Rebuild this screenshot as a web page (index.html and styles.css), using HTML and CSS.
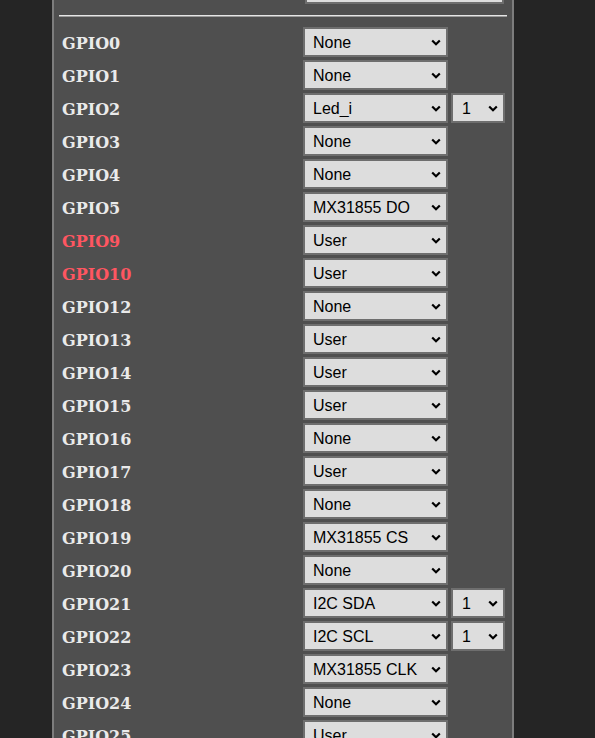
FILE: index.html
```html
<!DOCTYPE html>
<html>
<head>
<meta charset="utf-8">
<link rel="stylesheet" href="styles.css">
</head>
<body>
<div class="panel">
  <div class="top">
    <select class="sel wide"><option>ESP32-DevKit</option></select>
  </div>
  <hr class="rule">
  <div class="rows">
    <div class="row"><span class="lbl">GPIO0</span><select class="sel"><option>None</option></select></div>
    <div class="row"><span class="lbl">GPIO1</span><select class="sel"><option>None</option></select></div>
    <div class="row"><span class="lbl">GPIO2</span><select class="sel"><option>Led_i</option></select><select class="sel idx"><option>1</option></select></div>
    <div class="row"><span class="lbl">GPIO3</span><select class="sel"><option>None</option></select></div>
    <div class="row"><span class="lbl">GPIO4</span><select class="sel"><option>None</option></select></div>
    <div class="row"><span class="lbl">GPIO5</span><select class="sel"><option>MX31855 DO</option></select></div>
    <div class="row"><span class="lbl warn">GPIO9</span><select class="sel"><option>User</option></select></div>
    <div class="row"><span class="lbl warn">GPIO10</span><select class="sel"><option>User</option></select></div>
    <div class="row"><span class="lbl">GPIO12</span><select class="sel"><option>None</option></select></div>
    <div class="row"><span class="lbl">GPIO13</span><select class="sel"><option>User</option></select></div>
    <div class="row"><span class="lbl">GPIO14</span><select class="sel"><option>User</option></select></div>
    <div class="row"><span class="lbl">GPIO15</span><select class="sel"><option>User</option></select></div>
    <div class="row"><span class="lbl">GPIO16</span><select class="sel"><option>None</option></select></div>
    <div class="row"><span class="lbl">GPIO17</span><select class="sel"><option>User</option></select></div>
    <div class="row"><span class="lbl">GPIO18</span><select class="sel"><option>None</option></select></div>
    <div class="row"><span class="lbl">GPIO19</span><select class="sel"><option>MX31855 CS</option></select></div>
    <div class="row"><span class="lbl">GPIO20</span><select class="sel"><option>None</option></select></div>
    <div class="row"><span class="lbl">GPIO21</span><select class="sel"><option>I2C SDA</option></select><select class="sel idx"><option>1</option></select></div>
    <div class="row"><span class="lbl">GPIO22</span><select class="sel"><option>I2C SCL</option></select><select class="sel idx"><option>1</option></select></div>
    <div class="row"><span class="lbl">GPIO23</span><select class="sel"><option>MX31855 CLK</option></select></div>
    <div class="row"><span class="lbl">GPIO24</span><select class="sel"><option>None</option></select></div>
    <div class="row"><span class="lbl">GPIO25</span><select class="sel"><option>User</option></select></div>
  </div>
</div>
</body>
</html>
```

FILE: styles.css
```css
html, body {
  margin: 0;
  padding: 0;
  background: #252525;
  height: 738px;
  overflow: hidden;
}

.panel {
  margin-left: 52px;
  width: 448px;
  min-height: 800px;
  background: #4f4f4f;
  border-left: 2px solid #7d7d7d;
  border-right: 2px solid #7d7d7d;
  padding: 0 5px;
}

.top {
  display: flex;
  justify-content: flex-end;
  margin-top: -26px;
  padding-right: 3px;
}

.rule {
  margin: 11px 0 10px 0;
  border: 0;
  border-top: 1px solid #e6e6e6;
  border-bottom: 1px solid #9a9a9a;
  height: 0;
}

.rows {
  display: flex;
  flex-direction: column;
  gap: 3px;
}

.row {
  display: grid;
  grid-template-columns: 241px 145px 54px;
  column-gap: 3px;
  align-items: center;
  height: 30px;
}

.lbl {
  padding-left: 3px;
  padding-top: 2px;
  font-family: "DejaVu Serif", serif;
  font-weight: bold;
  font-size: 16px;
  color: #eaeaea;
}

.lbl.warn {
  color: #ff5661;
}

.sel {
  appearance: none;
  -webkit-appearance: none;
  box-sizing: border-box;
  height: 30px;
  margin: 0;
  border: 2px solid #6e6e6e;
  border-radius: 0;
  background-color: #dddddd;
  background-image: url("data:image/svg+xml;utf8,<svg xmlns='http://www.w3.org/2000/svg' width='10' height='7' viewBox='0 0 10 7'><path d='M1.2 1.5 L5 5.2 L8.8 1.5' fill='none' stroke='black' stroke-width='2.2'/></svg>");
  background-repeat: no-repeat;
  background-position: right 5px center;
  background-size: 10px 7px;
  color: #000;
  font-family: "Liberation Sans", Arial, sans-serif;
  font-size: 16px;
  padding: 0 18px 0 8px;
  width: 145px;
}

.sel.idx {
  width: 54px;
  padding-left: 9px;
}

.sel.wide {
  width: 199px;
}
```
